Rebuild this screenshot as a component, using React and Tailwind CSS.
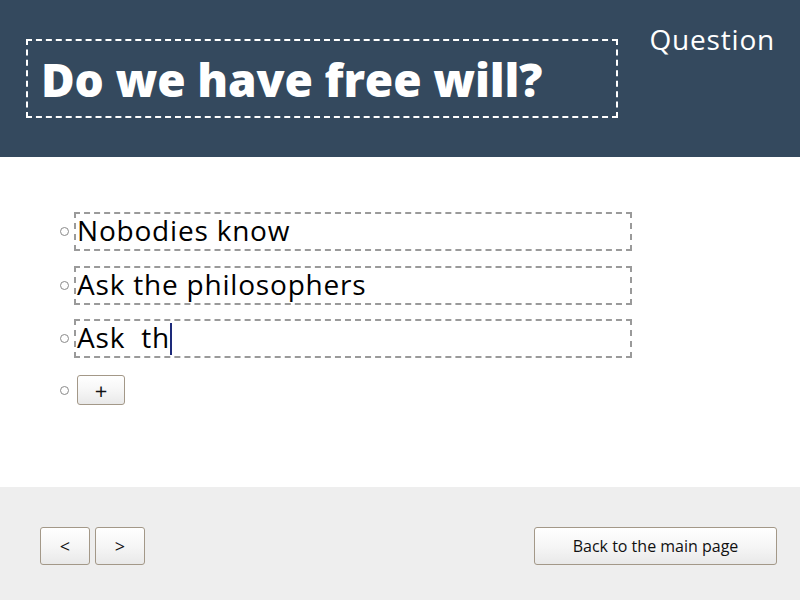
const items = ['Nobodies know', 'Ask the philosophers']

function Bullet() {
    return <span className="w-[9px] h-[9px] rounded-full border border-[#8a8a8a] shrink-0 mr-[5px]" />
}

function Btn({ children, className }) {
    return (
        <button
            className={`rounded-[3px] border border-[#a39888] bg-gradient-to-b from-white via-[#f6f6f6] to-[#e9e9e9] text-[#111] ${className}`}
        >
            {children}
        </button>
    )
}

function Field({ children }) {
    return (
        <div className="w-[558px] h-[39px] border-2 border-dashed border-[#9a9a9a] flex items-center pl-[1px] pb-[3px] text-[28px] tracking-[0.8px] text-black">
            {children}
        </div>
    )
}

export default function App() {
    return (
        <div className="w-[800px] h-[600px] flex flex-col bg-white" style={{ fontFamily: '"Open Sans", sans-serif' }}>
            <header className="h-[157px] bg-[#34495e] flex items-start justify-between pl-[26px] pr-[25px] pt-[39px]">
                <div className="w-[592px] h-[79px] border-2 border-dashed border-white flex items-center pl-[13px]">
                    <h1 className="text-white text-[46px] font-extrabold leading-none tracking-[-0.15px]">Do we have free will?</h1>
                </div>
                <span className="text-white text-[28px] font-normal -mt-[14px] leading-none tracking-[0.8px]">Question</span>
            </header>

            <main className="flex-1 flex flex-col gap-[15px] pl-[60px] pt-[55px]">
                {items.map((t) => (
                    <div key={t} className="flex items-center">
                        <Bullet />
                        <Field>{t}</Field>
                    </div>
                ))}
                <div className="flex items-center -mt-[1px]">
                    <Bullet />
                    <Field>
                        Ask&nbsp;&nbsp;th
                        <span className="w-[2px] h-[32px] mt-[3px] bg-[#1d2a7a]" />
                    </Field>
                </div>
                <div className="flex items-center pt-[2px]">
                    <Bullet />
                    <Btn className="w-[48px] h-[30px] ml-[3px] text-[22px] leading-none">+</Btn>
                </div>
            </main>

            <footer className="h-[113px] bg-[#eeeeee] flex items-center justify-between pl-[40px] pr-[23px] pt-[5px]">
                <div className="flex gap-[5px]">
                    <Btn className="w-[50px] h-[38px] text-[18px]">&lt;</Btn>
                    <Btn className="w-[50px] h-[38px] text-[18px]">&gt;</Btn>
                </div>
                <Btn className="w-[243px] h-[38px] text-[16px]">Back to the main page</Btn>
            </footer>
        </div>
    )
}
